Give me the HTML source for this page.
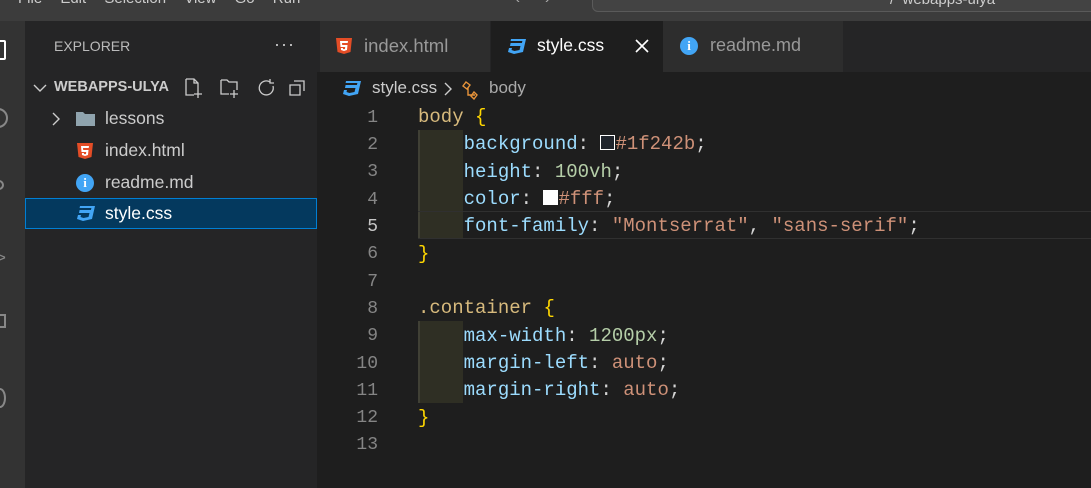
<!DOCTYPE html>
<html><head><style>
*{margin:0;padding:0;box-sizing:border-box}
body{width:1091px;height:488px;overflow:hidden;background:#1e1e1e;position:relative;font-family:"Liberation Sans",sans-serif}
.a{position:absolute}
.ui{font-family:"Liberation Sans",sans-serif;font-size:17px;color:#ccc;white-space:nowrap}
.code{font-family:"Liberation Mono",monospace;font-size:19px;white-space:pre}
.ln{position:absolute;left:330px;width:48px;text-align:right;color:#858585;font-family:"Liberation Mono",monospace;font-size:18px}
.p{color:#9cdcfe}.v{color:#ce9178}.n{color:#b5cea8}.s{color:#d7ba7d}.b{color:#ffd700}.w{color:#d4d4d4}
</style></head><body>
<div class="a" style="left:0;top:0;width:1091px;height:21px;background:#3c3c3c"></div>
<div class="a ui" style="left:18px;top:-10px;font-size:15px;color:#ccc;word-spacing:14px">File Edit Selection View Go Run</div>
<div class="a ui" style="left:515px;top:-10px;font-size:15px;color:#aaa">‹ &nbsp;&nbsp;&nbsp;&nbsp; ›</div>
<div class="a" style="left:592px;top:-8px;width:520px;height:20px;background:#434343;border:1px solid #5a5a5a;border-radius:6px"></div>
<div class="a ui" style="left:890px;top:-9px;font-size:15px;color:#ccc">/ &nbsp;webapps-ulya</div>
<div class="a" style="left:0;top:21px;width:25px;height:467px;background:#333"></div>
<div class="a" style="left:-8px;top:40px;width:14px;height:20px;border:2px solid #fff;border-radius:2px"></div>
<div class="a" style="left:-12px;top:108px;width:20px;height:20px;border:2px solid #888;border-radius:50%"></div>
<div class="a" style="left:-6px;top:180px;width:10px;height:10px;border:2px solid #888;border-radius:50%"></div>
<div class="a ui" style="left:-4px;top:248px;color:#888">&gt;</div>
<div class="a" style="left:-6px;top:314px;width:12px;height:14px;border:2px solid #888"></div>
<div class="a" style="left:-6px;top:388px;width:12px;height:20px;border:2px solid #888;border-radius:50%"></div>
<div class="a" style="left:25px;top:21px;width:292px;height:467px;background:#252526"></div>
<div class="a ui" style="left:54px;top:38px;font-size:14px;color:#bbb">EXPLORER</div>
<div class="a ui" style="left:274px;top:34px;font-size:18px;color:#ccc;letter-spacing:1px">···</div>
<svg class="a" style="left:30px;top:80px" width="20" height="16"><path d="M4 5l6 6 6-6" stroke="#ccc" fill="none" stroke-width="1.4"/></svg>
<div class="a ui" style="left:54px;top:79px;font-size:14.5px;font-weight:bold;color:#ccc">WEBAPPS-ULYA</div>
<svg class="a" style="left:184px;top:76px" width="130" height="24" fill="none" stroke="#ccc" stroke-width="1.3">
<path d="M2 3h8l4 4v7M2 3v16h8M14 7h-4V3M14 14v8M10 18h8"/>
<path d="M37 4h6l2 2h8v8M37 4v14h8M50 14v8M46 18h8"/>
<path d="M86 6a7 7 0 1 0 3 4M86 3v4h4"/>
<path d="M106 9h10v10h-10zM110 5h10v10"/>
</svg>
<svg class="a" style="left:48px;top:110px" width="16" height="18"><path d="M5 3l6 6-6 6" stroke="#ccc" fill="none" stroke-width="1.4"/></svg>
<svg class="a" style="left:75px;top:110px" width="22" height="18"><path d="M1 2h7l2 2h10v12H1z" fill="#90a4ae"/></svg>
<div class="a ui" style="left:105px;top:108px;font-size:17.5px">lessons</div>
<svg class="a" style="left:76px;top:142px" width="18" height="18"><path d="M1 1h16l-1.5 14L9 17l-6.5-2z" fill="#e44d26"/><path d="M5 4h8l-.3 2H7l.2 2h5.3l-.5 5-3 1-3-1-.1-2h2l.1 1 1 .3 1-.3.2-2H5.5z" fill="#fff"/></svg>
<div class="a ui" style="left:105px;top:140px;font-size:17.5px">index.html</div>
<div class="a" style="left:76px;top:174px;width:18px;height:18px;border-radius:50%;background:#42a5f5;color:#fff;font:bold 13px 'Liberation Serif',serif;text-align:center;line-height:18px">i</div>
<div class="a ui" style="left:105px;top:172px;font-size:17.5px">readme.md</div>
<div class="a" style="left:25px;top:198px;width:292px;height:31px;background:#04395e;border:1px solid #007fd4"></div>
<svg class="a" style="left:76px;top:205px" width="20" height="17"><path d="M4 1h15l-3 13-9 2-6-2 1-4h3l-.5 2 3 1 5-1 1-4H3l.6-3h11.3l.5-2H3.6z" fill="#42a5f5"/></svg>
<div class="a ui" style="left:105px;top:203px;color:#fff;font-size:17.5px">style.css</div>
<div class="a" style="left:317px;top:21px;width:774px;height:51px;background:#252526"></div>
<div class="a" style="left:320px;top:21px;width:170px;height:51px;background:#2d2d2d"></div>
<svg class="a" style="left:335px;top:37px" width="18" height="18"><path d="M1 1h16l-1.5 14L9 17l-6.5-2z" fill="#e44d26"/><path d="M5 4h8l-.3 2H7l.2 2h5.3l-.5 5-3 1-3-1-.1-2h2l.1 1 1 .3 1-.3.2-2H5.5z" fill="#fff"/></svg>
<div class="a ui" style="left:364px;top:35px;color:#999;font-size:18.5px">index.html</div>
<div class="a" style="left:491px;top:21px;width:172px;height:51px;background:#1e1e1e"></div>
<svg class="a" style="left:507px;top:38px" width="20" height="17"><path d="M4 1h15l-3 13-9 2-6-2 1-4h3l-.5 2 3 1 5-1 1-4H3l.6-3h11.3l.5-2H3.6z" fill="#42a5f5"/></svg>
<div class="a ui" style="left:537px;top:35px;color:#fff;font-size:17.5px">style.css</div>
<svg class="a" style="left:635px;top:39px" width="14" height="14"><path d="M1 1l12 12M13 1L1 13" stroke="#fff" stroke-width="1.6"/></svg>
<div class="a" style="left:663px;top:21px;width:180px;height:51px;background:#2d2d2d"></div>
<div class="a" style="left:680px;top:37px;width:18px;height:18px;border-radius:50%;background:#42a5f5;color:#fff;font:bold 13px 'Liberation Serif',serif;text-align:center;line-height:18px">i</div>
<div class="a ui" style="left:710px;top:35px;color:#999;font-size:18px">readme.md</div>
<svg class="a" style="left:342px;top:80px" width="20" height="17"><path d="M4 1h15l-3 13-9 2-6-2 1-4h3l-.5 2 3 1 5-1 1-4H3l.6-3h11.3l.5-2H3.6z" fill="#42a5f5"/></svg>
<div class="a ui" style="left:372px;top:78px">style.css</div>
<svg class="a" style="left:444px;top:80px" width="50" height="20" fill="none" stroke-width="1.4"><path d="M1 3l6 6-6 6" stroke="#ccc"/><path d="M22 2l4 3-3 4-4-3zM24 8v7h7M30 12l3 3-3 4-3-3z" stroke="#e8943a"/></svg>
<div class="a ui" style="left:489px;top:78px;color:#aaa">body</div>
<div class="a" style="left:418px;top:130px;width:45px;height:109px;background:#2f2f24;border-left:2px solid #404035"></div>
<div class="a" style="left:418px;top:321px;width:45px;height:82px;background:#2f2f24;border-left:2px solid #404035"></div>
<div class="a" style="left:418px;top:211px;width:673px;height:28px;border-top:1px solid #303030;border-bottom:1px solid #303030"></div>
<div class="ln" style="top:108px">1</div><div class="ln" style="top:135px">2</div><div class="ln" style="top:162px">3</div><div class="ln" style="top:190px">4</div><div class="ln" style="top:217px;color:#c6c6c6">5</div><div class="ln" style="top:244px">6</div><div class="ln" style="top:272px">7</div><div class="ln" style="top:299px">8</div><div class="ln" style="top:326px">9</div><div class="ln" style="top:354px">10</div><div class="ln" style="top:381px">11</div><div class="ln" style="top:408px">12</div><div class="ln" style="top:435px">13</div>
<div class="a code w" style="left:418px;top:104px;line-height:27.33px"><span class="s">body</span> <span class="b">{</span>
    <span class="p">background</span>: <span style="display:inline-block;width:15px;height:15px;border:1px solid #fff;background:#1f242b;vertical-align:-1px"></span><span class="v">#1f242b</span>;
    <span class="p">height</span>: <span class="n">100vh</span>;
    <span class="p">color</span>: <span style="display:inline-block;width:15px;height:15px;border:1px solid #fff;background:#fff;vertical-align:-1px"></span><span class="v">#fff</span>;
    <span class="p">font-family</span>: <span class="v">"Montserrat"</span>, <span class="v">"sans-serif"</span>;
<span class="b">}</span>

<span class="s">.container</span> <span class="b">{</span>
    <span class="p">max-width</span>: <span class="n">1200px</span>;
    <span class="p">margin-left</span>: <span class="v">auto</span>;
    <span class="p">margin-right</span>: <span class="v">auto</span>;
<span class="b">}</span>
</div>
</body></html>
